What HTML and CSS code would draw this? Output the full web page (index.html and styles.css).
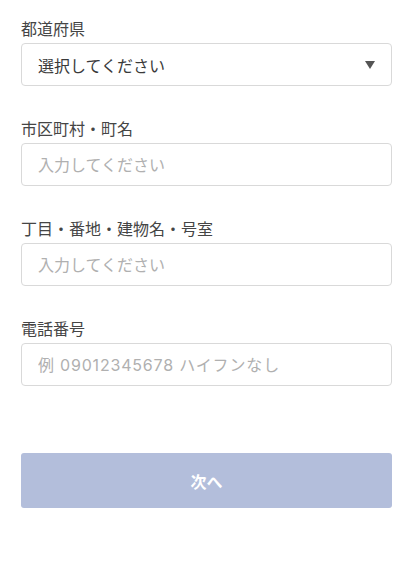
FILE: index.html
```html
<!DOCTYPE html>
<html lang="ja">
<head>
<meta charset="utf-8">
<title>住所入力</title>
<link rel="stylesheet" href="styles.css">
</head>
<body>
<form class="form">
  <div class="field">
    <label class="label">都道府県</label>
    <div class="select-box">
      <span class="select-text">選択してください</span>
      <svg class="arrow" width="10" height="8" viewBox="0 0 10 8"><path d="M0 0H10L5 8Z" fill="#555"/></svg>
    </div>
  </div>
  <div class="field">
    <label class="label">市区町村・町名</label>
    <input class="input" type="text" placeholder="入力してください">
  </div>
  <div class="field">
    <label class="label">丁目・番地・建物名・号室</label>
    <input class="input" type="text" placeholder="入力してください">
  </div>
  <div class="field">
    <label class="label">電話番号</label>
    <input class="input input-tel" type="text" placeholder="例 09012345678 ハイフンなし">
  </div>
  <button class="next" type="button">次へ</button>
</form>
</body>
</html>
```
FILE: styles.css
```css
html, body {
  margin: 0;
  padding: 0;
  background: #fff;
}
body {
  font-family: "Inter", "Noto Sans CJK JP", sans-serif;
  color: #333;
}
.form {
  display: flex;
  flex-direction: column;
  padding: 18px 21px 0 21px;
}
.field {
  display: flex;
  flex-direction: column;
  gap: 3px;
  margin-bottom: 32px;
}
.label {
  font-size: 16px;
  line-height: 22px;
  color: #454545;
}
.select-box {
  box-sizing: border-box;
  height: 43px;
  border: 1px solid #d9d9d9;
  border-radius: 4px;
  display: flex;
  align-items: center;
  justify-content: space-between;
  padding: 0 16px 0 16px;
}
.select-text {
  font-size: 16px;
  color: #3a3a3a;
}
.arrow {
  display: block;
}
.input {
  box-sizing: border-box;
  width: 100%;
  height: 43px;
  margin: 0;
  border: 1px solid #d9d9d9;
  border-radius: 4px;
  padding: 0 16px;
  font-family: "Inter", "Noto Sans CJK JP", sans-serif;
  font-size: 16px;
  color: #333;
  background: #fff;
  outline: none;
  -webkit-appearance: none;
  appearance: none;
}
.input-tel {
  letter-spacing: 0.8px;
}
.input::placeholder {
  color: #b0b0b0;
}
.next {
  margin-top: 35px;
  height: 55px;
  width: 100%;
  border: none;
  border-radius: 3px;
  background: #b3bedb;
  color: #fff;
  font-family: "Noto Sans CJK JP", sans-serif;
  font-size: 16px;
  font-weight: bold;
}
```
